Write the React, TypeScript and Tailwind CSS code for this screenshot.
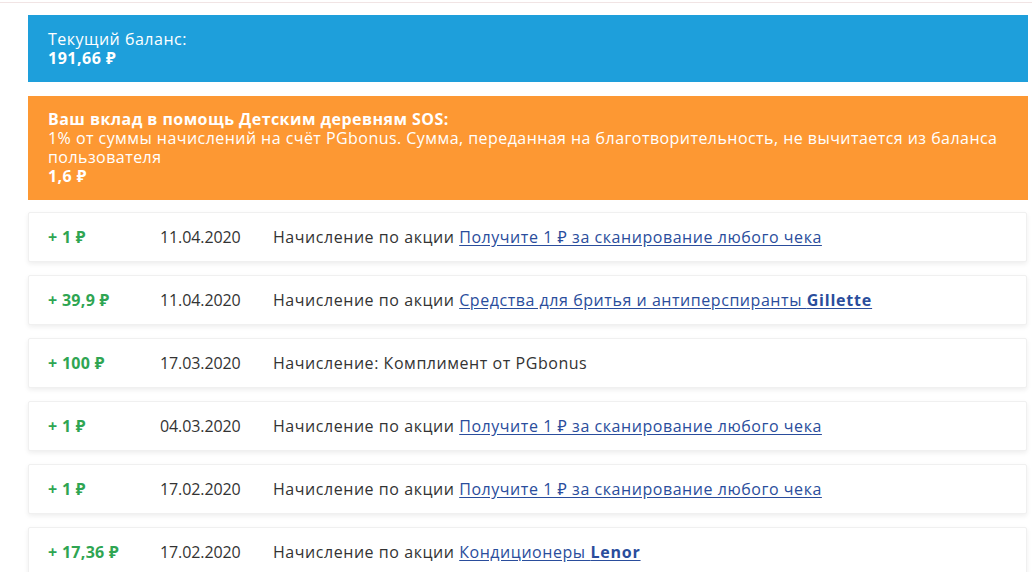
import React from "react";

type Row = {
  amount: string;
  date: string;
  prefix: string;
  link?: string;
  brand?: string;
};

const rows: Row[] = [
  { amount: "+ 1 ₽", date: "11.04.2020", prefix: "Начисление по акции ", link: "Получите 1 ₽ за сканирование любого чека" },
  { amount: "+ 39,9 ₽", date: "11.04.2020", prefix: "Начисление по акции ", link: "Средства для бритья и антиперспиранты ", brand: "Gillette" },
  { amount: "+ 100 ₽", date: "17.03.2020", prefix: "Начисление: Комплимент от PGbonus" },
  { amount: "+ 1 ₽", date: "04.03.2020", prefix: "Начисление по акции ", link: "Получите 1 ₽ за сканирование любого чека" },
  { amount: "+ 1 ₽", date: "17.02.2020", prefix: "Начисление по акции ", link: "Получите 1 ₽ за сканирование любого чека" },
  { amount: "+ 17,36 ₽", date: "17.02.2020", prefix: "Начисление по акции ", link: "Кондиционеры ", brand: "Lenor" },
];

export default function App() {
  return (
    <div
      className="w-[1032px] h-[572px] overflow-hidden bg-white"
      style={{ fontFamily: '"Open Sans", "Noto Sans", sans-serif' }}
    >
      <div className="h-[2px]" />
      <div className="border-t border-[#f1e4e4]" />
      <div className="pl-[28px] pr-[4px] pt-[12px] flex flex-col">
        <div className="w-[1000px] h-[67px] bg-[#1e9fdb] text-white px-[20px] pt-[15px] text-[16px] leading-[19px] tracking-[0.5px]">
          <div className="font-normal">Текущий баланс:</div>
          <div className="font-bold">191,66 ₽</div>
        </div>
        <div className="w-[1000px] mt-[14px] h-[104px] bg-[#fd9833] text-white px-[20px] pt-[14px] text-[16px] leading-[19px] tracking-[0.45px]">
          <div className="font-bold">Ваш вклад в помощь Детским деревням SOS:</div>
          <div>
            1% от суммы начислений на счёт PGbonus. Сумма, переданная на благотворительность, не вычитается из баланса пользователя
          </div>
          <div className="font-bold">1,6 ₽</div>
        </div>
        <div className="flex flex-col gap-[13px] mt-[12px]">
          {rows.map((r, i) => (
            <div
              key={i}
              className="w-[999px] h-[50px] bg-white rounded-[2px] border border-[#f0f0f0] shadow-[0_2px_5px_rgba(0,0,0,0.07)] flex items-center text-[16px] text-[#333]"
            >
              <div className="w-[131px] pl-[19px] font-bold text-[#2fa552] tracking-[0.3px]">{r.amount}</div>
              <div className="w-[113px] tracking-[-0.1px]">{r.date}</div>
              <div className="tracking-[0.55px]">
                {r.prefix}
                {r.link && (
                  <a className="text-[#2a4d9c] underline underline-offset-2 cursor-pointer">
                    {r.link}
                    {r.brand && <b className="font-bold tracking-[0.8px]">{r.brand}</b>}
                  </a>
                )}
              </div>
            </div>
          ))}
        </div>
      </div>
    </div>
  );
}
